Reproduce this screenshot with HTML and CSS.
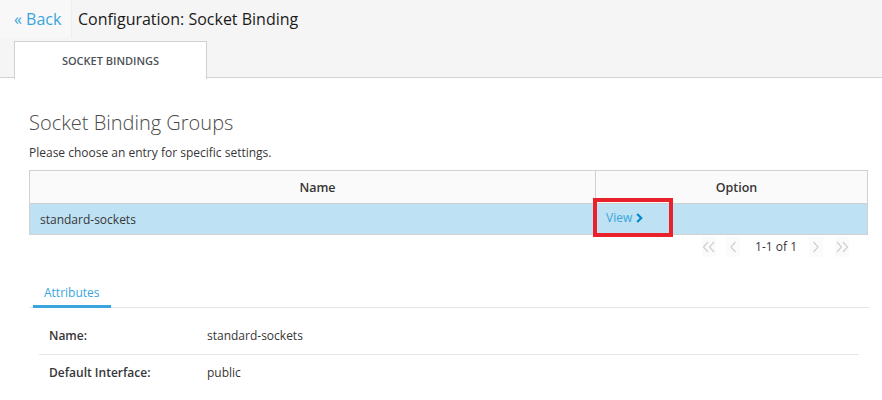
FILE: index.html
```html
<!DOCTYPE html>
<html>
<head>
<meta charset="utf-8">
<link rel="stylesheet" href="styles.css">
</head>
<body>
<div class="header">
  <div class="topbar">
    <a class="back">« Back</a>
    <span class="page-title">Configuration: Socket Binding</span>
  </div>
  <div class="tabs">
    <div class="tab active">SOCKET BINDINGS</div>
  </div>
</div>
<div class="content">
  <h1 class="heading">Socket Binding Groups</h1>
  <p class="intro">Please choose an entry for specific settings.</p>
  <table class="grid">
    <thead>
      <tr><th class="col-name">Name</th><th class="col-opt">Option</th></tr>
    </thead>
    <tbody>
      <tr class="selected"><td>standard-sockets</td><td class="opt"><span class="view-wrap"><a class="view">View <svg class="chev" width="7" height="10" viewBox="0 0 7 10"><path d="M1.2 1 L5.2 5 L1.2 9" fill="none" stroke="#0088ce" stroke-width="2.2"/></svg></a></span></td></tr>
    </tbody>
  </table>
  <div class="pager">
    <span class="pg-btn"><svg width="14" height="12" viewBox="0 0 14 12"><path d="M6 1 L1.5 6 L6 11 M12 1 L7.5 6 L12 11" fill="none" stroke="#d1d1d1" stroke-width="1.3"/></svg></span>
    <span class="pg-btn gap-a"><svg width="8" height="12" viewBox="0 0 8 12"><path d="M6.5 1 L2 6 L6.5 11" fill="none" stroke="#d1d1d1" stroke-width="1.3"/></svg></span>
    <span class="pg-text">1-1 of 1</span>
    <span class="pg-btn"><svg width="8" height="12" viewBox="0 0 8 12"><path d="M1.5 1 L6 6 L1.5 11" fill="none" stroke="#d1d1d1" stroke-width="1.3"/></svg></span>
    <span class="pg-btn gap-b"><svg width="14" height="12" viewBox="0 0 14 12"><path d="M2 1 L6.5 6 L2 11 M8 1 L12.5 6 L8 11" fill="none" stroke="#d1d1d1" stroke-width="1.3"/></svg></span>
  </div>
  <div class="subtabs">
    <span class="subtab active">Attributes</span>
  </div>
  <div class="attrs">
    <div class="attr-row"><span class="attr-label">Name:</span><span class="attr-value">standard-sockets</span></div>
    <div class="attr-row"><span class="attr-label">Default Interface:</span><span class="attr-value">public</span></div>
  </div>
</div>
</body>
</html>
```
FILE: styles.css
```css
html, body {
  margin: 0;
  padding: 0;
  background: #ffffff;
  font-family: "Open Sans", "Liberation Sans", sans-serif;
  color: #363636;
  font-size: 12px;
}
.header {
  background: #f5f5f5;
  border-bottom: 1px solid #d1d1d1;
  height: 78px;
  box-sizing: border-box;
}
.topbar {
  display: flex;
  align-items: center;
  height: 38px;
}
.back {
  display: flex;
  align-items: center;
  height: 38px;
  width: 72px;
  padding-left: 14px;
  box-sizing: border-box;
  background: #f8f8f8;
  border-right: 1px solid #eeeeee;
  color: #39a5dc;
  font-size: 16px;
  margin-right: 6px;
}
.page-title {
  font-size: 16px;
  color: #1a1a1a;
}
.tabs {
  display: flex;
  padding-left: 14px;
  padding-top: 3px;
}
.tab {
  width: 193px;
  height: 38px;
  box-sizing: border-box;
  border: 1px solid #d1d1d1;
  border-bottom: none;
  background: #ffffff;
  font-size: 11px;
  font-weight: 600;
  color: #4d5258;
  display: flex;
  align-items: center;
  justify-content: center;
  margin-bottom: -1px;
}
.content {
  padding: 0 14px 0 29px;
}
.heading {
  margin: 31px 0 0 0;
  font-size: 20px;
  font-weight: 300;
  line-height: 28px;
  color: #4a4a4a;
}
.intro {
  margin: 8px 0 0 0;
  font-size: 12px;
  line-height: 16px;
}
.grid {
  margin-top: 9px;
  width: 839px;
  border-collapse: collapse;
  font-size: 12px;
}
.grid th {
  background: #fafafa;
  border: 1px solid #d1d1d1;
  height: 32px;
  padding: 0 0 0 10px;
  font-weight: 600;
  font-size: 12.5px;
  color: #363636;
  text-align: center;
}
.col-name { width: 555px; }
.grid td {
  border: 1px solid #d1d1d1;
  height: 30px;
  padding: 0 10px;
}
.selected td {
  background: #bee1f4;
}
.opt { position: relative; }
.view {
  color: #39a5dc;
  display: inline-flex;
  align-items: center;
  gap: 4px;
}
.view-wrap {
  position: absolute;
  left: -3px;
  top: -6px;
  width: 80px;
  height: 39px;
  box-sizing: border-box;
  border: 4px solid #e8212b;
  display: flex;
  align-items: center;
  padding-left: 9px;
}
.pager {
  display: flex;
  justify-content: flex-end;
  align-items: center;
  height: 23px;
  padding-right: 19px;
  width: 839px;
  box-sizing: border-box;
}
.pg-btn {
  display: inline-flex;
  align-items: center;
  justify-content: center;
  width: 14px;
  height: 20px;
  background: #fbfbfb;
}
.gap-a {
  margin-left: 10px;
}
.gap-b {
  margin-left: 12px;
}
.pg-text {
  margin: 0 12px 0 15px;
  color: #363636;
  font-size: 12px;
}
.subtabs {
  margin-top: 22px;
  border-bottom: 1px solid #e6e6e6;
  width: 840px;
  display: flex;
}
.subtab {
  margin-left: 4px;
  padding: 0 11px;
  height: 28px;
  display: flex;
  align-items: center;
  color: #39a5dc;
  border-bottom: 3px solid #39a5dc;
  margin-bottom: -1px;
  box-sizing: border-box;
}
.attrs {
  margin-left: 10px;
  width: 820px;
}
.attr-row {
  display: flex;
  align-items: center;
  padding-left: 10px;
  box-sizing: border-box;
}
.attr-row:first-child {
  height: 46px;
  padding-top: 9px;
}
.attr-row + .attr-row {
  border-top: 1px solid #e6e6e6;
  height: 36px;
}
.attr-label {
  width: 158px;
  font-weight: 600;
}
.attr-value {
  color: #363636;
}
```
